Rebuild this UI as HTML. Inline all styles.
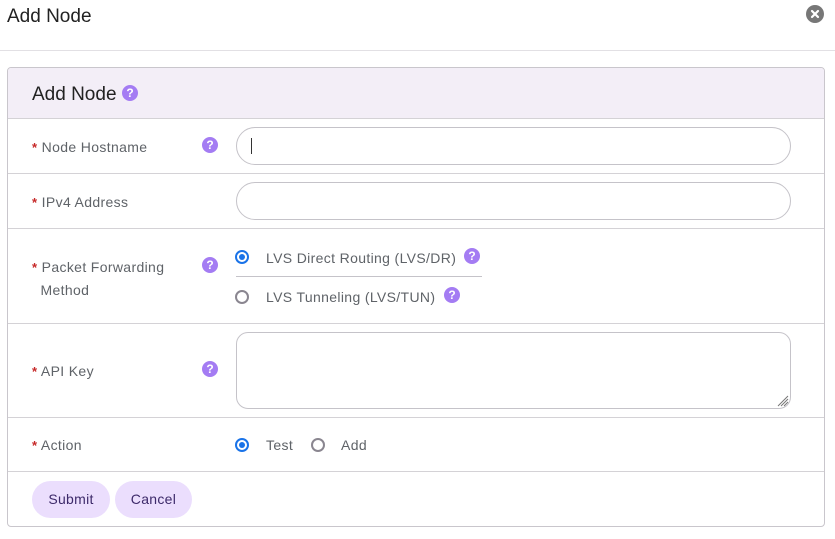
<!DOCTYPE html>
<html><head><style>
*{box-sizing:border-box;margin:0;padding:0}
body{width:835px;height:539px;background:#fff;font-family:"Liberation Sans",sans-serif;position:relative;overflow:hidden;color:#222}
.a{position:absolute}
.t{font-size:14px;color:#5f6368;line-height:16px;letter-spacing:0.35px}
.star{color:#c62828;font-size:13px;font-weight:bold}
.q{position:absolute;width:16px;height:16px;border-radius:50%;background:#a47cf3;color:#fff;font-size:12px;font-weight:bold;text-align:center;line-height:16px}
.line{position:absolute;left:8px;width:816px;height:1px;background:#d4d2d6}
.inp{position:absolute;left:236px;width:555px;height:38px;border:1px solid #c5c3c9;border-radius:19px;background:#fff}
.r{position:absolute;width:14px;height:14px;border-radius:50%;border:2px solid #8a8690;background:#fff}
.r.on{border-color:#1a73e8}
.r.on::after{content:"";position:absolute;left:2px;top:2px;width:6px;height:6px;border-radius:50%;background:#1a73e8}
.btn{position:absolute;top:481px;height:37px;border-radius:19px;background:#ebdefd;color:#3d2a6a;font-size:14px;text-align:center;line-height:37px;letter-spacing:0.3px}
</style></head><body>
<div class="a" style="left:7px;top:6px;font-size:19px;color:#222">Add Node</div>
<div class="a" style="left:806px;top:5px;width:18px;height:18px;border-radius:50%;background:#777">
<svg width="18" height="18"><path d="M6 6L12 12M12 6L6 12" stroke="#fff" stroke-width="2.2" stroke-linecap="round"/></svg></div>
<div class="a" style="left:0;top:50px;width:835px;height:1px;background:#e2e0e4"></div>
<div class="a" style="left:7px;top:67px;width:818px;height:460px;border:1px solid #c9c6cc;border-radius:4px"></div>
<div class="a" style="left:8px;top:68px;width:816px;height:50px;background:#f3eef7;border-radius:3px 3px 0 0"></div>
<div class="a" style="left:32px;top:84px;font-size:19px;color:#222">Add Node</div>
<div class="q" style="left:122px;top:85px">?</div>
<div class="line" style="top:118px"></div>
<div class="line" style="top:173px"></div>
<div class="line" style="top:228px"></div>
<div class="line" style="top:323px"></div>
<div class="line" style="top:417px"></div>
<div class="line" style="top:471px"></div>

<div class="a t" style="left:32px;top:139px"><span class="star">*</span> Node Hostname</div>
<div class="q" style="left:202px;top:137px">?</div>
<div class="inp" style="top:127px"><div class="a" style="left:14px;top:10px;width:1px;height:16px;background:#333"></div></div>

<div class="a t" style="left:32px;top:194px"><span class="star">*</span> IPv4 Address</div>
<div class="inp" style="top:182px"></div>

<div class="a t" style="left:32px;top:256px;line-height:22px"><span class="star">*</span> Packet Forwarding<br>&nbsp;&nbsp;Method</div>
<div class="q" style="left:202px;top:257px">?</div>
<div class="r on" style="left:235px;top:250px"></div>
<div class="a t" style="left:266px;top:250px">LVS Direct Routing (LVS/DR)</div>
<div class="q" style="left:464px;top:248px">?</div>
<div class="a" style="left:236px;top:276px;width:246px;height:1px;background:#c5c3c9"></div>
<div class="r" style="left:235px;top:290px"></div>
<div class="a t" style="left:266px;top:289px">LVS Tunneling (LVS/TUN)</div>
<div class="q" style="left:444px;top:287px">?</div>

<div class="a t" style="left:32px;top:363px"><span class="star">*</span> API Key</div>
<div class="q" style="left:202px;top:361px">?</div>
<div class="inp" style="top:332px;height:77px;border-radius:12px">
<svg class="a" style="right:1px;bottom:1px" width="14" height="14"><path d="M13 3L3 13M13 6L6 13M13 9L9 13" stroke="#777" stroke-width="1"/></svg></div>

<div class="a t" style="left:32px;top:437px"><span class="star">*</span> Action</div>
<div class="r on" style="left:235px;top:438px"></div>
<div class="a t" style="left:266px;top:437px">Test</div>
<div class="r" style="left:311px;top:438px"></div>
<div class="a t" style="left:341px;top:437px">Add</div>

<div class="btn" style="left:32px;width:78px">Submit</div>
<div class="btn" style="left:115px;width:77px">Cancel</div>
</body></html>
